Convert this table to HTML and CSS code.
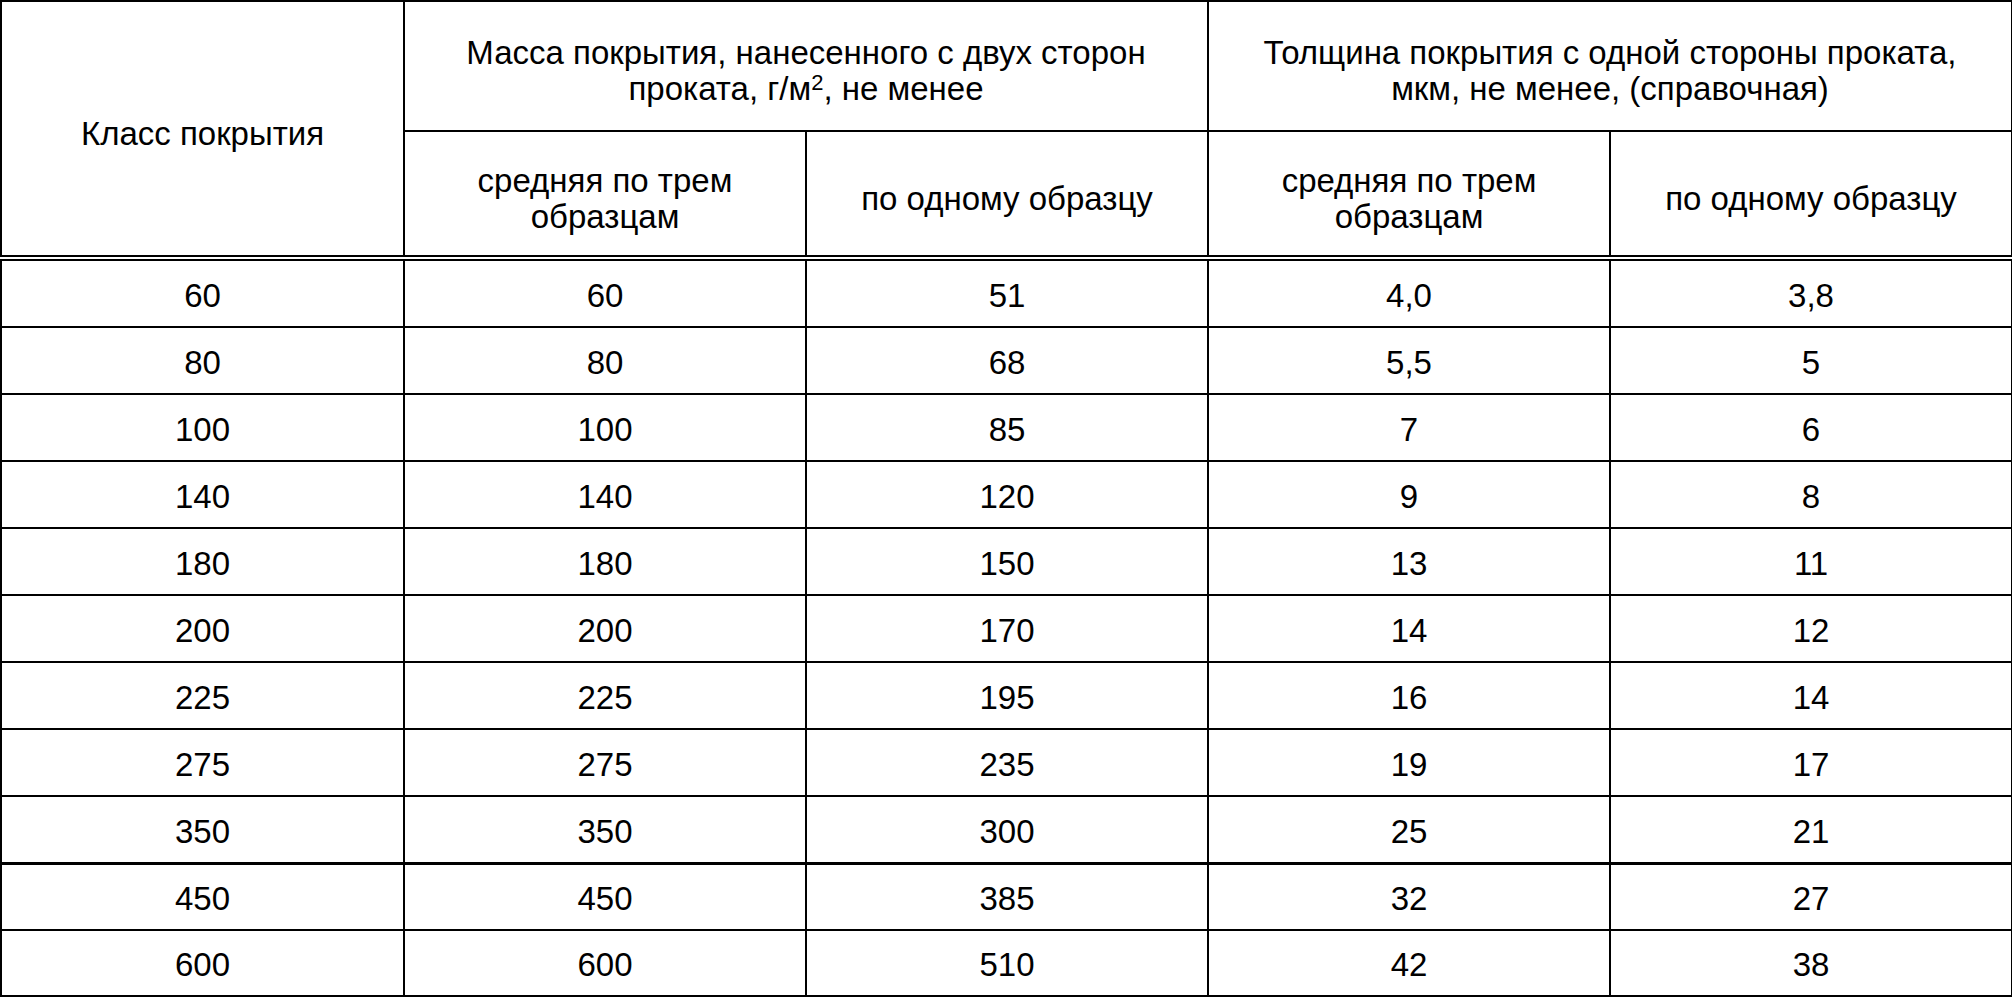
FILE: index.html
```html
<!DOCTYPE html>
<html lang="ru">
<head>
<meta charset="utf-8">
<title>Класс покрытия</title>
<link rel="stylesheet" href="styles.css">
</head>
<body>
<table class="spec">
  <colgroup>
    <col class="c1"><col class="c2"><col class="c3"><col class="c4"><col class="c5">
  </colgroup>
  <thead>
    <tr class="h1">
      <th rowspan="2" class="last-head">Класс покрытия</th>
      <th colspan="2">Масса покрытия, нанесенного с двух сторон<br>проката, г/м<sup>2</sup>, не менее</th>
      <th colspan="2">Толщина покрытия с одной стороны проката,<br>мкм, не менее, (справочная)</th>
    </tr>
    <tr class="h2">
      <th class="last-head">средняя по трем<br>образцам</th>
      <th class="last-head">по одному образцу</th>
      <th class="last-head">средняя по трем<br>образцам</th>
      <th class="last-head">по одному образцу</th>
    </tr>
  </thead>
  <tbody>
    <tr><td>60</td><td>60</td><td>51</td><td>4,0</td><td>3,8</td></tr>
    <tr><td>80</td><td>80</td><td>68</td><td>5,5</td><td>5</td></tr>
    <tr><td>100</td><td>100</td><td>85</td><td>7</td><td>6</td></tr>
    <tr><td>140</td><td>140</td><td>120</td><td>9</td><td>8</td></tr>
    <tr><td>180</td><td>180</td><td>150</td><td>13</td><td>11</td></tr>
    <tr><td>200</td><td>200</td><td>170</td><td>14</td><td>12</td></tr>
    <tr><td>225</td><td>225</td><td>195</td><td>16</td><td>14</td></tr>
    <tr><td>275</td><td>275</td><td>235</td><td>19</td><td>17</td></tr>
    <tr><td>350</td><td>350</td><td>300</td><td>25</td><td>21</td></tr>
    <tr class="thick-top"><td>450</td><td>450</td><td>385</td><td>32</td><td>27</td></tr>
    <tr class="last-row"><td>600</td><td>600</td><td>510</td><td>42</td><td>38</td></tr>
  </tbody>
</table>
</body>
</html>
```
FILE: styles.css
```css
html, body {
  margin: 0;
  padding: 0;
  background: #ffffff;
}
body {
  font-family: "Liberation Sans", Arial, sans-serif;
  color: #000000;
}
.spec {
  border-collapse: collapse;
  width: 2012px;
  table-layout: fixed;
  font-size: 33px;
  line-height: 36px;
}
.c1 { width: 403px; }
.c2, .c3, .c4, .c5 { width: 402px; }
.spec th, .spec td {
  border: 2px solid #000;
  padding: 0;
  text-align: center;
  vertical-align: middle;
  font-weight: normal;
}
.spec th { padding-top: 10px; }
.spec td { padding-top: 4px; }
.spec sup {
  font-size: 22px;
  line-height: 0;
  vertical-align: 10px;
}
.h1 th { height: 118px; }
.h2 th { height: 113px; }
.spec th.last-head { border-bottom: 6px double #000; }
.spec td { height: 61px; }
.spec .thick-top td { border-top-width: 3px; height: 60px; }
.spec .last-row td { height: 60px; }
```
